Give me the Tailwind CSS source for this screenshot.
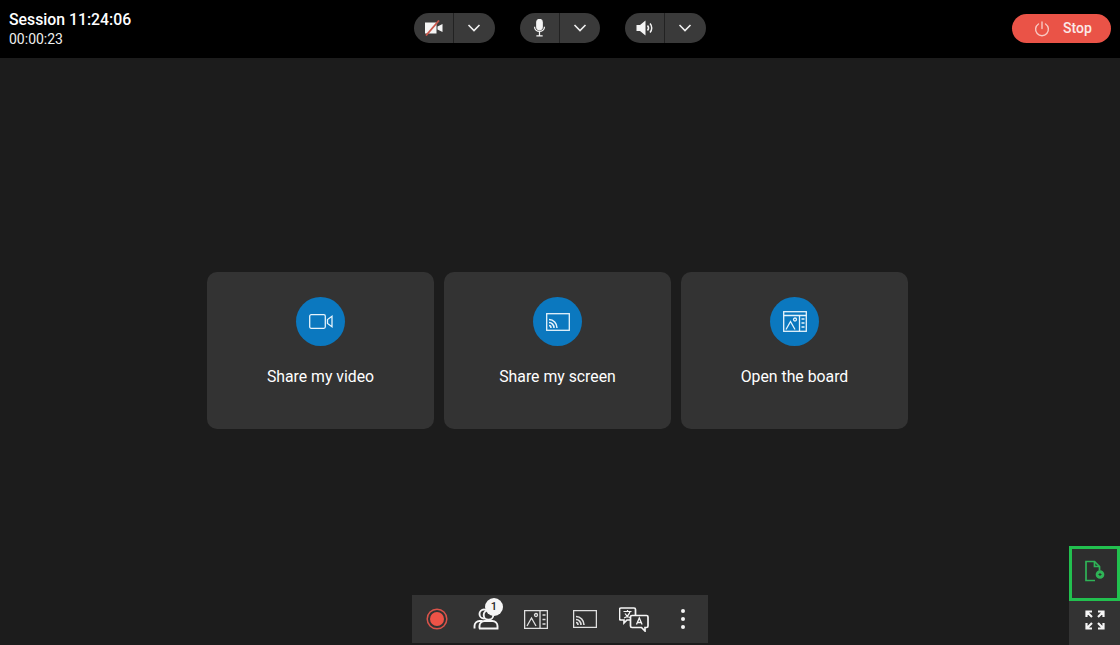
<!DOCTYPE html>
<html lang="en">
<head>
    <meta charset="UTF-8">
    <meta name="viewport" content="width=device-width, initial-scale=1.0">
    <title>Session</title>
    <script src="https://cdn.jsdelivr.net/npm/@tailwindcss/browser@4"></script>
</head>
<body class="relative w-[1120px] h-[645px] overflow-hidden flex flex-col bg-[#1c1c1c] text-white font-['Roboto',sans-serif]">
    <!-- top bar -->
    <header class="h-[58px] shrink-0 bg-black flex items-start">
        <div class="w-[414px] pl-[9px] pt-[10px]">
            <div class="text-[15.8px] leading-[20px] font-medium">Session 11:24:06</div>
            <div class="text-[14px] leading-[18px] text-[#eeeeee]">00:00:23</div>
        </div>
        <div class="flex gap-[25px] mt-[13px]">
            <div class="w-[80.5px] h-[30px] rounded-full bg-[#3a3a3a] flex items-center">
                <div class="w-[40px] h-full flex items-center justify-center border-r border-[#222]">
                    <svg width="20" height="16" viewBox="0 0 20 16">
                        <path d="M1 2.500h11.500v11H1z M13.500 6.500l5-2.500v8l-5-2.500z" fill="#f5f5f5"/>
                        <path d="M2 15.500L15 .5" stroke="#c9574b" stroke-width="1.800"/>
                    </svg>
                </div>
                <div class="flex-1 flex items-center justify-center">
                    <svg width="14" height="8" viewBox="0 0 14 8" fill="none" stroke="#f0f0f0" stroke-width="1.600"><path d="M1.500 1l5.500 5.500 5.500-5.500"/></svg>
                </div>
            </div>
            <div class="w-[80.5px] h-[30px] rounded-full bg-[#3a3a3a] flex items-center">
                <div class="w-[40px] h-full flex items-center justify-center border-r border-[#222]">
                    <svg width="13" height="18" viewBox="0 0 14 20" fill="none" stroke="#f5f5f5" stroke-width="1.400">
                        <rect x="4" y="0.500" width="6" height="11.500" rx="3" fill="#f5f5f5"/>
                        <path d="M1.500 8.500c0 7 11 7 11 0M7 14v4.500M3.500 18.800h7"/>
                    </svg>
                </div>
                <div class="flex-1 flex items-center justify-center">
                    <svg width="14" height="8" viewBox="0 0 14 8" fill="none" stroke="#f0f0f0" stroke-width="1.600"><path d="M1.500 1l5.500 5.500 5.500-5.500"/></svg>
                </div>
            </div>
            <div class="w-[80.5px] h-[30px] rounded-full bg-[#3a3a3a] flex items-center">
                <div class="w-[40px] h-full flex items-center justify-center border-r border-[#222]">
                    <svg width="18" height="16" viewBox="0 0 18 16" fill="none">
                        <path d="M0.500 5h3.500l5.500-4.500v15l-5.500-4.500h-3.500z" fill="#f5f5f5"/>
                        <path d="M11.500 5.500c1.300 1.500 1.300 3.500 0 5M14 3.500c2.300 2.500 2.300 6.500 0 9" stroke="#f5f5f5" stroke-width="1.500"/>
                    </svg>
                </div>
                <div class="flex-1 flex items-center justify-center">
                    <svg width="14" height="8" viewBox="0 0 14 8" fill="none" stroke="#f0f0f0" stroke-width="1.600"><path d="M1.500 1l5.500 5.500 5.500-5.500"/></svg>
                </div>
            </div>
        </div>
        <button class="ml-auto mr-[9px] mt-[14px] w-[99px] h-[29px] rounded-full bg-[#ea5347] flex items-center pl-[22px] gap-[13px]">
            <svg width="16" height="16" viewBox="0 0 15 15" fill="none" stroke="#f8c9c3" stroke-width="1.300" stroke-linecap="round">
                <path d="M7.500 1v6M4.200 2.800a6 6 0 1 0 6.600 0"/>
            </svg>
            <span class="text-[14px] font-medium text-[#fbe9e7]">Stop</span>
        </button>
    </header>

    <!-- share options -->
    <main class="flex-1 flex items-start justify-center pt-[214px] pr-[5px] gap-[10px]">
        <div class="w-[227px] h-[157px] rounded-[10px] bg-[#333333] flex flex-col items-center pt-[25px]">
            <div class="w-[49px] h-[49px] rounded-full bg-[#0b78bf] flex items-center justify-center">
                <svg width="24" height="15" viewBox="0 0 24 15" fill="none" stroke="#e6f3fb" stroke-width="1.300">
                    <rect x="0.700" y="0.700" width="15.600" height="13.600" rx="1.500"/>
                    <path d="M23 2.200l-4.500 3.300v4l4.500 3.300z"/>
                </svg>
            </div>
            <div class="mt-[21px] text-[15.8px] leading-[20px] text-white">Share my video</div>
        </div>
        <div class="w-[227px] h-[157px] rounded-[10px] bg-[#333333] flex flex-col items-center pt-[25px]">
            <div class="w-[49px] h-[49px] rounded-full bg-[#0b78bf] flex items-center justify-center">
                <svg width="24" height="18" viewBox="0 0 24 18" fill="none" stroke="#e6f3fb" stroke-width="1.300">
                    <rect x="0.700" y="0.700" width="22.600" height="16.600"/>
                    <path d="M3 6.500c4.500 0 8 3.700 8 8.500M3 9.500c2.800 0 5 2.500 5 5.500M3 12.500c1.100 0 2 1.100 2 2.500" stroke-width="1.500"/>
                </svg>
            </div>
            <div class="mt-[21px] text-[15.8px] leading-[20px] text-white">Share my screen</div>
        </div>
        <div class="w-[227px] h-[157px] rounded-[10px] bg-[#333333] flex flex-col items-center pt-[25px]">
            <div class="w-[49px] h-[49px] rounded-full bg-[#0b78bf] flex items-center justify-center">
                <svg width="24" height="21" viewBox="0 0 24 21" fill="none" stroke="#e6f3fb" stroke-width="1.300">
                    <rect x="0.700" y="0.700" width="22.600" height="19.600"/>
                    <path d="M0.700 4.500h22.600M16.500 4.500v15.800"/>
                    <path d="M3 18.500l4.500-8 4.500 8"/>
                    <circle cx="12" cy="8.500" r="1.500"/>
                    <path d="M18.500 8h3M18.500 12h3M18.500 16h3" stroke-width="1.600"/>
                </svg>
            </div>
            <div class="mt-[21px] text-[15.8px] leading-[20px] text-white">Open the board</div>
        </div>
    </main>

    <!-- bottom toolbar -->
    <div class="absolute left-[412px] top-[595px] w-[296px] h-[48px] bg-[#333333] flex items-center">
        <div class="w-[49px] flex justify-center">
            <svg width="22" height="22" viewBox="0 0 22 22">
                <circle cx="11" cy="11" r="9.800" fill="none" stroke="#d9534a" stroke-width="1.500"/>
                <circle cx="11" cy="11" r="7" fill="#ee5347"/>
            </svg>
        </div>
        <div class="w-[50px] flex justify-center relative">
            <svg width="26" height="22" viewBox="0 0 26 22" fill="none" stroke="#f5f5f5" stroke-width="1.900">
                <circle cx="11" cy="6" r="4.500"/>
                <circle cx="15.500" cy="7" r="4.800" fill="#333333"/>
                <path d="M1.500 20.500v-2.500c0-3 2.500-5 5-5h3"/>
                <path d="M6 20.500h18.500v-2.500c0-3-2.500-5-5-5h-8c-2.500 0-5 2-5 5v2.500" fill="#333333"/>
            </svg>
            <span class="absolute left-[24px] top-[-10px] w-[18px] h-[18px] rounded-full bg-[#f5f5f5] text-[#222] text-[11px] leading-[18px] text-center font-medium">1</span>
        </div>
        <div class="w-[49px] flex justify-center">
            <svg width="24" height="19" viewBox="0 0 24 19" fill="none" stroke="#e0e0e0" stroke-width="1.300">
                <rect x="0.600" y="0.600" width="22.800" height="17.800"/>
                <path d="M16 0.600v17.800"/>
                <path d="M3 16l4.500-8 4.500 8"/>
                <circle cx="12" cy="5" r="1.500"/>
                <path d="M18.500 5h3M18.500 9.500h3M18.500 14h3" stroke-width="1.600"/>
            </svg>
        </div>
        <div class="w-[49px] flex justify-center">
            <svg width="24" height="18" viewBox="0 0 24 18" fill="none" stroke="#e0e0e0" stroke-width="1.300">
                <rect x="0.600" y="0.600" width="22.800" height="16.800"/>
                <path d="M3 6.500c4.500 0 8 3.700 8 8.500M3 9.500c2.800 0 5 2.500 5 5.500M3 12.500c1.100 0 2 1.100 2 2.500" stroke-width="1.600"/>
            </svg>
        </div>
        <div class="w-[49px] flex justify-center">
            <svg width="30" height="25" viewBox="0 0 30 25" fill="none" stroke="#f5f5f5" stroke-width="1.700">
                <path d="M2 1h13c1 0 1.500.6 1.500 1.500v9c0 1-.6 1.500-1.500 1.500H8l-3 3v-3H2c-1 0-1.500-.6-1.500-1.500v-9C.5 1.600 1 1 2 1z"/>
                <path d="M4.500 4.500h8M8.500 3v1.500M11 4.500c-.8 3-3 5.500-6 6.500M6 6.500c1 2 2.800 3.500 5 4" stroke-width="1.200"/>
                <path d="M13 8.500h14.500c1 0 1.500.6 1.500 1.500v9c0 1-.6 1.500-1.500 1.500H26v3.500l-3.500-3.500H13c-1 0-1.500-.6-1.500-1.500v-9c0-.9.500-1.500 1.500-1.500z" fill="#333333"/>
                <path d="M17.500 17.500l2.800-6.500 2.800 6.500M18.500 15.500h3.600" stroke-width="1.300"/>
            </svg>
        </div>
        <div class="w-[50px] flex flex-col items-center gap-[3.500px]">
            <span class="w-[4.500px] h-[4.500px] rounded-full bg-[#f5f5f5]"></span>
            <span class="w-[4.500px] h-[4.500px] rounded-full bg-[#f5f5f5]"></span>
            <span class="w-[4.500px] h-[4.500px] rounded-full bg-[#f5f5f5]"></span>
        </div>
    </div>

    <!-- right side buttons -->
    <div class="absolute left-[1069px] top-[546px] w-[51px] h-[99px] flex flex-col">
        <div class="h-[55px] border-[3px] border-[#22c04f] bg-[#2e2e2e] flex items-center justify-center pb-[5px]">
            <svg width="21" height="22" viewBox="0 0 21 22" fill="none" stroke="#2fb457" stroke-width="1.700">
                <path d="M11 20.500H2V1.500h8.500l5 5v4"/>
                <path d="M10.500 1.500v5h5"/>
                <circle cx="16" cy="14.500" r="3.500" fill="#2fb457"/>
                <path d="M14.500 14.500h3M16 13v3" stroke="#2e2e2e" stroke-width="1"/>
            </svg>
        </div>
        <div class="flex-1 bg-[#333333] flex justify-center pt-[9px]">
            <svg width="20" height="20" viewBox="0 0 20 20" fill="none" stroke="#f5f5f5" stroke-width="2.200">
                <path d="M1.500 7V1.500H7M1.500 1.500l5.500 5.500M13 1.500h5.500V7M18.500 1.500L13 7M1.500 13v5.500H7M1.500 18.500L7 13M13 18.500h5.500V13M18.500 18.500L13 13"/>
            </svg>
        </div>
    </div>
</body>
</html>
